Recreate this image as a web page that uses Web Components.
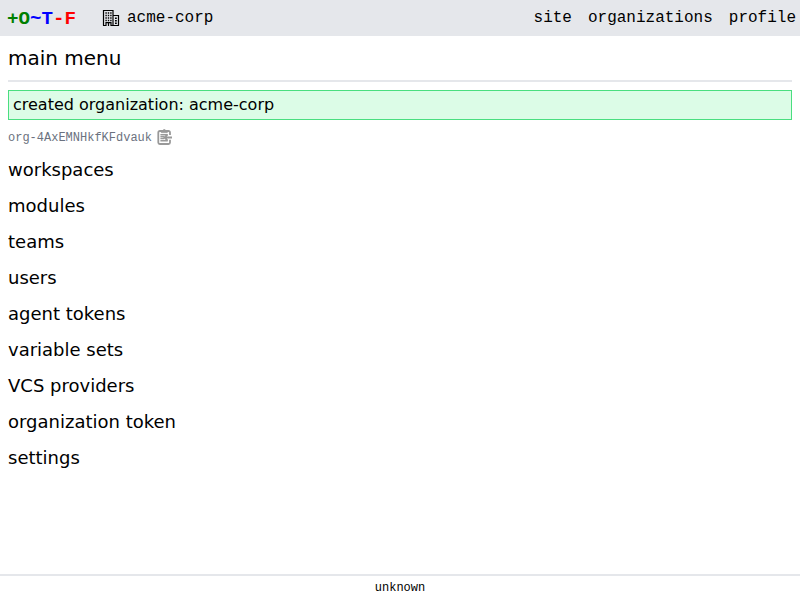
<!DOCTYPE html>
<html lang="en"><head><meta charset="utf-8"><title>main menu</title>
<style>
html,body{margin:0;height:100%}
body{font:16px/24px "DejaVu Sans",sans-serif;color:#000;background:#fff}
</style></head><body>
<app-shell>
<top-bar slot="header" organization="acme-corp"><nav-link>site</nav-link><nav-link>organizations</nav-link><nav-link>profile</nav-link></top-bar>
<page-title>main menu</page-title>
<flash-message>created organization: acme-corp</flash-message>
<copyable-id>org-4AxEMNHkfKFdvauk</copyable-id>
<main-menu>
<menu-item>workspaces</menu-item><menu-item>modules</menu-item><menu-item>teams</menu-item><menu-item>users</menu-item><menu-item>agent tokens</menu-item><menu-item>variable sets</menu-item><menu-item>VCS providers</menu-item><menu-item>organization token</menu-item><menu-item>settings</menu-item>
</main-menu>
<page-footer slot="footer">unknown</page-footer>
</app-shell>
<script>
const define=(name,html)=>customElements.define(name,class extends HTMLElement{
 constructor(){super();this.attachShadow({mode:'open'}).innerHTML=html;}
 connectedCallback(){const o=this.shadowRoot.querySelector('.org');if(o)o.textContent=this.getAttribute('organization');}
});
const mono='"Liberation Mono",monospace';
define('app-shell',`<style>:host{display:flex;flex-direction:column;height:100vh}main{flex:1;display:flex;flex-direction:column;padding:8px}</style><slot name="header"></slot><main><slot></slot></main><slot name="footer"></slot>`);
define('top-bar',`<style>:host{display:flex;align-items:center;height:36px;box-sizing:border-box;background:#e5e7eb;padding:0 4px 0 7px;font-family:${mono}}
.logo{font-size:19.2px;font-weight:700;width:95px;padding-top:2px}.g{color:green}.b{color:blue}.r{color:red}svg{width:18px;height:18px;margin-right:7px;flex:none}nav{margin-left:auto;display:flex;gap:16px}</style>
<span class="logo"><span class="g">+O</span><span class="b">~T</span><span class="r">-F</span></span>
<svg viewBox="0 0 18 18"><path d="M1.5 16.5v-15h9.5v15M11 6.5h5.5v10M1 16.5h3v-2.8h5v2.8h8M6.5 14v3" fill="none" stroke="#000" stroke-width="1.2"/><path d="M3.4 4h7M3.4 6.5h7M3.4 9h7M3.4 11.5h7" stroke="#000" stroke-width="1.3" stroke-dasharray="1.4 1"/><path d="M13 9.2h1.8M13 11.7h1.8M13 14.2h1.8" stroke="#000" stroke-width="1.4"/></svg>
<span class="org"></span><nav><slot></slot></nav>`);
define('nav-link','<style>:host{display:block}</style><slot></slot>');
define('page-title','<style>:host{display:block;box-sizing:border-box;height:38px;font-size:20px;line-height:28px;border-bottom:2px solid #e5e7eb;margin-bottom:8px}</style><slot></slot>');
define('flash-message','<style>:host{display:block;box-sizing:border-box;height:30px;line-height:28px;padding-left:4px;background:#dcfce7;border:1px solid #4ade80;margin-bottom:8px}</style><slot></slot>');
define('copyable-id',`<style>:host{display:flex;align-items:center;height:18px;font:12px/18px ${mono};color:#6b7280}span{padding-top:2px}svg{width:16px;height:16px;margin-left:5px}</style><span><slot></slot></span>
<svg viewBox="0 0 16 16" fill="none" stroke="#999"><path d="M13 6V3.5a1.5 1.5 0 0 0-1.5-1.5h-8.7a1.5 1.5 0 0 0-1.5 1.5v10a1.5 1.5 0 0 0 1.5 1.5h8.7a1.5 1.5 0 0 0 1.5-1.5v-2.7" stroke-width="1.8"/><path d="M4.3 3.6v-2h1.7C6.1.2 8.5.2 8.6 1.6h1.7v2z" fill="#999" stroke-width=".8"/><path d="M3.4 5.7h7M3.4 7.6h4M3.4 9.5h4M3.4 11.8h7.3" stroke-width="1.4"/><path d="M15 8.5H8M10.6 5.4L7.5 8.5l3.1 3.1" stroke-width="1.8"/></svg>`);
define('main-menu','<style>:host{display:flex;flex-direction:column;gap:8px;margin-top:10px}</style><slot></slot>');
define('menu-item','<style>:host{display:block;font-size:18px;line-height:28px}</style><slot></slot>');
define('page-footer',`<style>:host{display:block;box-sizing:border-box;height:26px;border-top:2px solid #e5e7eb;text-align:center;font:12px/24px ${mono}}</style><slot></slot>`);
</script></body></html>
